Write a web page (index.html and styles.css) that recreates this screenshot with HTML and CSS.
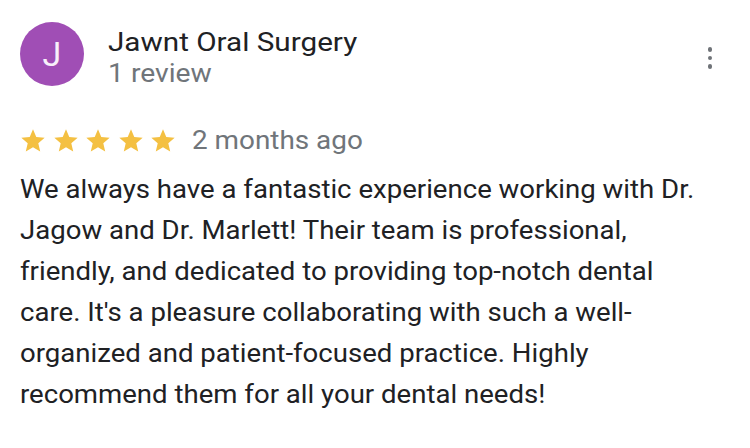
FILE: index.html
```html
<!DOCTYPE html>
<html>
<head>
<meta charset="utf-8">
<link rel="stylesheet" href="styles.css">
</head>
<body>
<div class="review">
  <div class="header">
    <div class="avatar">J</div>
    <div class="author">
      <div class="name"><span class="wide name-text">Jawnt Oral Surgery</span></div>
      <div class="count"><span class="wide count-text">1 review</span></div>
    </div>
    <div class="menu"><span></span><span></span><span></span></div>
  </div>
  <div class="meta">
    <div class="stars">
      <svg class="star" viewBox="0 0 24 24"><path d="M12 17.27L18.18 21l-1.64-7.03L22 9.24l-7.19-.61L12 2 9.19 8.63 2 9.24l5.46 4.73L5.82 21z"/></svg>
      <svg class="star" viewBox="0 0 24 24"><path d="M12 17.27L18.18 21l-1.64-7.03L22 9.24l-7.19-.61L12 2 9.19 8.63 2 9.24l5.46 4.73L5.82 21z"/></svg>
      <svg class="star" viewBox="0 0 24 24"><path d="M12 17.27L18.18 21l-1.64-7.03L22 9.24l-7.19-.61L12 2 9.19 8.63 2 9.24l5.46 4.73L5.82 21z"/></svg>
      <svg class="star" viewBox="0 0 24 24"><path d="M12 17.27L18.18 21l-1.64-7.03L22 9.24l-7.19-.61L12 2 9.19 8.63 2 9.24l5.46 4.73L5.82 21z"/></svg>
      <svg class="star" viewBox="0 0 24 24"><path d="M12 17.27L18.18 21l-1.64-7.03L22 9.24l-7.19-.61L12 2 9.19 8.63 2 9.24l5.46 4.73L5.82 21z"/></svg>
    </div>
    <span class="date"><span class="wide date-text">2 months ago</span></span>
  </div>
  <p class="text">We always have a fantastic experience working with Dr.<br>Jagow and Dr. Marlett! Their team is professional,<br>friendly, and dedicated to providing top-notch dental<br>care. It's a pleasure collaborating with such a well-<br>organized and patient-focused practice. Highly<br>recommend them for all your dental needs!</p>
</div>
</body>
</html>
```
FILE: styles.css
```css
html, body {
  margin: 0;
  padding: 0;
  background: #ffffff;
}
body {
  font-family: Roboto, "Liberation Sans", Arial, sans-serif;
  color: #202124;
}
.review {
  padding: 22px 20px 0 20px;
}
.wide {
  display: inline-block;
  transform-origin: left center;
  white-space: nowrap;
}
.header {
  display: flex;
  align-items: flex-start;
}
.avatar {
  width: 64px;
  height: 64px;
  border-radius: 50%;
  background: #a04eb5;
  color: #f8f0fa;
  font-size: 34px;
  display: flex;
  align-items: center;
  justify-content: center;
  flex: none;
}
.author {
  margin-left: 24px;
  flex: 1;
  padding-top: 4.5px;
}
.name {
  font-size: 25px;
  line-height: 31px;
  color: #202124;
}
.name-text {
  transform: scaleX(1.186);
}
.count {
  font-size: 25px;
  line-height: 31px;
  color: #70757a;
}
.count-text {
  transform: scaleX(1.13);
}
.menu {
  display: flex;
  flex-direction: column;
  gap: 4px;
  margin-top: 25px;
  margin-right: 18px;
}
.menu span {
  width: 4.5px;
  height: 4.5px;
  border-radius: 50%;
  background: #6f7378;
}
.meta {
  display: flex;
  align-items: center;
  margin-top: 37px;
  height: 30px;
}
.stars {
  display: flex;
  gap: 4.5px;
  margin-left: -0.6px;
}
.star {
  width: 28px;
  height: 28px;
  fill: #f4c042;
  display: block;
}
.date {
  margin-left: 14.5px;
  font-size: 25px;
  line-height: 30px;
  color: #70757a;
}
.date-text {
  transform: scaleX(1.115);
}
.text {
  margin: 13px 0 0 0;
  width: 615px;
  font-size: 25px;
  line-height: 41px;
  color: #202124;
  white-space: nowrap;
  transform: scaleX(1.103);
  transform-origin: left top;
}
```
